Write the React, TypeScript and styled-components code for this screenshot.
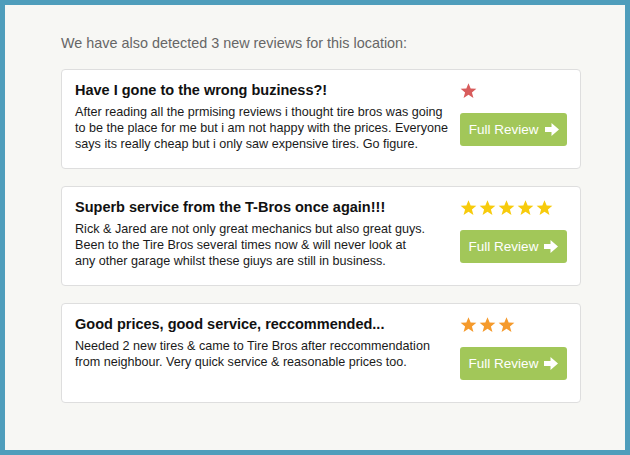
import styled, { createGlobalStyle } from "styled-components";

// body text is kept as the lines shown in the mockup so wrapping matches
const reviews = [
  {
    title: "Have I gone to the wrong buziness?!",
    lines: [
      "After reading all the prmising reviews i thought tire bros was going",
      "to be the place for me but i am not happy with the prices. Everyone",
      "says its really cheap but i only saw expensive tires. Go figure.",
    ],
    stars: 1,
  },
  {
    title: "Superb service from the T-Bros once again!!!",
    lines: [
      "Rick & Jared are not only great mechanics but also great guys.",
      "Been to the Tire Bros several times now & will never look at",
      "any other garage whilst these giuys are still in business.",
    ],
    stars: 5,
  },
  {
    title: "Good prices, good service, reccommended...",
    lines: [
      "Needed 2 new tires & came to Tire Bros after reccommendation",
      "from neighbour. Very quick service & reasonable prices too.",
    ],
    stars: 3,
  },
];

const starColour = (count: number) =>
  count <= 1 ? "#d85c5c" : count >= 5 ? "#f7cb0c" : "#f59a2c";

export default function App() {
  return (
    <>
      <GlobalStyle />
      <Frame>
        <Intro>We have also detected 3 new reviews for this location:</Intro>
        <ReviewList>
          {reviews.map((r) => (
            <ReviewCard key={r.title} review={r} />
          ))}
        </ReviewList>
      </Frame>
    </>
  );
}

type Review = { title: string; lines: string[]; stars: number };

const ReviewCard = ({ review }: { review: Review }) => {
  return (
    <Card>
      <Content>
        <Title>{review.title}</Title>
        <Body>
          {review.lines.map((line) => (
            <Line key={line}>{line}</Line>
          ))}
        </Body>
      </Content>
      <Side>
        <Stars>
          {Array.from({ length: review.stars }).map((_, i) => (
            <Star key={i} color={starColour(review.stars)} />
          ))}
        </Stars>
        <FullReview>
          Full Review
          <Arrow />
        </FullReview>
      </Side>
    </Card>
  );
};

const Star = ({ color }: { color: string }) => (
  <svg width="17" height="16" viewBox="0 0 24 23">
    <polygon
      fill={color}
      points="12,0.5 15.1,8 23.3,8.4 16.9,13.6 19.1,21.6 12,17 4.9,21.6 7.1,13.6 0.7,8.4 8.9,8"
    />
  </svg>
);

const Arrow = () => (
  <svg width="14" height="13" viewBox="0 0 14 13">
    <polygon fill="#fff" points="0,4 6.5,4 6.5,0 14,6.5 6.5,13 6.5,9 0,9" />
  </svg>
);

const GlobalStyle = createGlobalStyle`
  html, body {
    margin: 0;
    padding: 0;
  }
  body {
    font-family: "Liberation Sans", Arial, sans-serif;
  }
`;

const Frame = styled.div`
  box-sizing: border-box;
  width: 630px;
  height: 455px;
  border: 5px solid #4f9dbb;
  background: #f7f7f4;
  padding: 29px 45px 0 56px;
`;

const Intro = styled.p`
  margin: 0 0 17px;
  font-size: 14.4px;
  line-height: 18px;
  color: #666;
`;

const ReviewList = styled.div`
  display: flex;
  flex-direction: column;
  gap: 17px;
`;

const Card = styled.div`
  box-sizing: border-box;
  width: 520px;
  height: 100px;
  display: flex;
  padding: 11px 13px 0 13px;
  background: #fff;
  border: 1px solid #dedede;
  border-radius: 4px;
`;

const Content = styled.div`
  flex: 1;
  padding-right: 12px;
  white-space: nowrap;
`;

const Title = styled.h3`
  margin: 0 0 5px;
  font-size: 14.5px;
  line-height: 18px;
  font-weight: bold;
  color: #111;
`;

const Body = styled.div`
  font-size: 12.6px;
  line-height: 16px;
  color: #1a1a1a;
`;

const Line = styled.div``;

const Side = styled.div`
  width: 107px;
  flex: none;
  padding-top: 2px;
`;

const Stars = styled.div`
  display: flex;
  gap: 2px;
  height: 16px;
`;

const FullReview = styled.button`
  margin-top: 14px;
  width: 107px;
  height: 33px;
  display: flex;
  align-items: center;
  justify-content: center;
  gap: 6px;
  border: none;
  border-radius: 3px;
  background: #a2c759;
  color: #fff;
  font-family: "Liberation Sans", Arial, sans-serif;
  font-size: 13.5px;
  cursor: pointer;
  padding: 0;
`;
